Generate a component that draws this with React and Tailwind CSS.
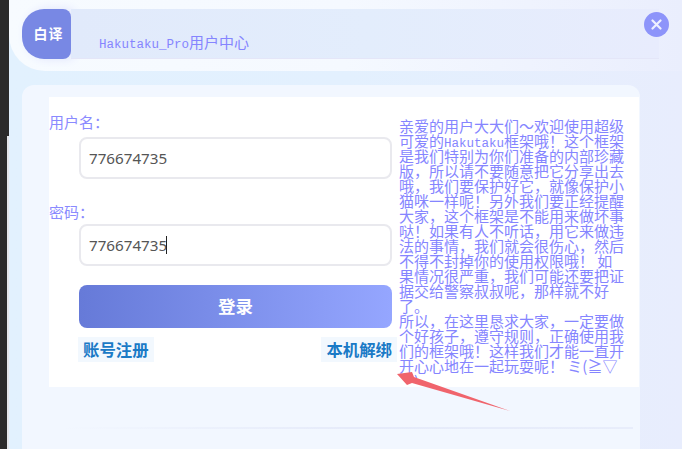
import React from 'react'

const cjk = "font-['Noto_Sans_CJK_SC',sans-serif]"

const notice = [
  '亲爱的用户大大们～欢迎使用超级',
  <>可爱的<Latin>Hakutaku</Latin>框架哦！这个框架</>,
  '是我们特别为你们准备的内部珍藏',
  '版，所以请不要随意把它分享出去',
  '哦，我们要保护好它，就像保护小',
  '猫咪一样呢！另外我们要正经提醒',
  '大家，这个框架是不能用来做坏事',
  '哒！如果有人不听话，用它来做违',
  '法的事情，我们就会很伤心，然后',
  '不得不封掉你的使用权限哦！ 如',
  '果情况很严重，我们可能还要把证',
  '据交给警察叔叔呢，那样就不好',
  '了。',
  '所以，在这里恳求大家，一定要做',
  '个好孩子，遵守规则，正确使用我',
  '们的框架哦！这样我们才能一直开',
  '开心心地在一起玩耍呢！ ミ(≧▽',
  '≦)',
]

function Latin({ children }) {
  return <span className="font-['Liberation_Mono',monospace] text-[12.5px] leading-none">{children}</span>
}

function Field({ label, labelClass, inputClass, caret }) {
  return (
    <>
      <div className={`h-5 text-[15px] leading-5 text-[#8a8aff] ${labelClass}`}>{label}</div>
      <div className={`relative ml-[30px] w-[313px] ${inputClass}`}>
        <input
          readOnly
          defaultValue="776674735"
          className="h-[42px] w-full rounded-lg border-2 border-[#e9e9ee] bg-white pl-2 font-['Noto_Sans',sans-serif] text-[15.2px] text-[#555] outline-none"
        />
        {caret ? <div className="absolute left-[87px] top-3 h-[18px] w-px bg-[#222]" /> : null}
      </div>
    </>
  )
}

export default function App() {
  return (
    <div className={`flex h-[449px] w-[682px] overflow-hidden ${cjk}`}>
      <div className="flex w-[9px] shrink-0 flex-col bg-[#2b2b2b]">
        <div className="ml-auto mt-[136px] w-[2px] flex-1 bg-[#e4e6ea]" />
      </div>

      <div className="relative flex-1 bg-gradient-to-r from-[#e2f1fe] via-[#e3f0fe] to-[#e8edfd]">
        <div className="h-[71px] rounded-bl-[36px] bg-gradient-to-r from-[#f7fbff] via-[#f5f9ff] to-[#eaeefd] pl-[13px] pt-[9px]">
          <div className="flex h-[50px]">
            <div className="flex w-[49px] shrink-0 items-center justify-center rounded-bl-[22px] rounded-br-lg rounded-tl-[22px] rounded-tr-lg bg-[#7888e4] pb-[2px] pl-[4px] text-[14px] font-bold tracking-[1px] text-white shadow-[4px_0_10px_#dfe3fb]">
              白译
            </div>
            <div className="w-[588px] border-b border-[#e4e6f8] bg-gradient-to-r from-[#e1eafb] via-[#e3edfc] to-[#e8ecfd] pl-7 pt-[24px] text-[15px] leading-[18px] text-[#8585ff]">
              <Latin>Hakutaku_Pro</Latin>用户中心
            </div>
          </div>
        </div>

        <div className="absolute left-[635px] top-3 flex h-[25px] w-[25px] items-center justify-center rounded-full bg-[#8d94fa]">
          <svg width="11" height="11" viewBox="0 0 11 11" fill="none" stroke="#eef0ff" strokeWidth="2.2" strokeLinecap="round">
            <path d="M1.5 1.5 9.5 9.5M9.5 1.5 1.5 9.5" />
          </svg>
        </div>

        <div className="ml-[13px] mt-[14px] h-[364px] w-[618px] rounded-t-xl bg-[#f2f7ff] pl-[27px] pt-3">
          <div className="flex h-[290px] w-[590px] bg-white">
            <div className="w-[350px] shrink-0 pt-[15px]">
              <Field label="用户名：" inputClass="mt-[5px]" />
              <Field label="密码：" labelClass="mt-[23px]" inputClass="mt-[2px]" caret />
              <button className="ml-[30px] mt-[19px] h-[43px] w-[313px] rounded-lg bg-gradient-to-r from-[#667ad8] to-[#95a6ff] text-[17.5px] font-bold text-white">
                登录
              </button>
              <div className="ml-[29px] mt-[9px] flex w-[319px] justify-between text-[16.4px] font-bold leading-[25px] text-[#1a7ac6]">
                <span className="bg-[#f2f8fe] px-[5px]">账号注册</span>
                <span className="bg-[#f2f8fe] px-[5px]">本机解绑</span>
              </div>
            </div>
            <div className="mt-[21px] h-[260px] w-[230px] overflow-hidden whitespace-pre text-[15px] leading-[15px] text-[#8585ff]">
              {notice.map((line, i) => (
                <div key={i} className="h-[15px]">{line}</div>
              ))}
            </div>
          </div>
          <div className="ml-[14px] mt-[40px] h-[2px] w-[570px] bg-gradient-to-r from-[#f2f7ff] via-[#e6ebfa] to-[#e8edfb]" />
        </div>

        {/* annotation arrow drawn on top of the screenshot */}
        <svg className="absolute left-[380px] top-[360px]" width="140" height="60" viewBox="0 0 140 60">
          <path d="M8 14 23 12 25 17 121 51 23 23 18 25Z" fill="#f0646c" />
        </svg>
      </div>
    </div>
  )
}
